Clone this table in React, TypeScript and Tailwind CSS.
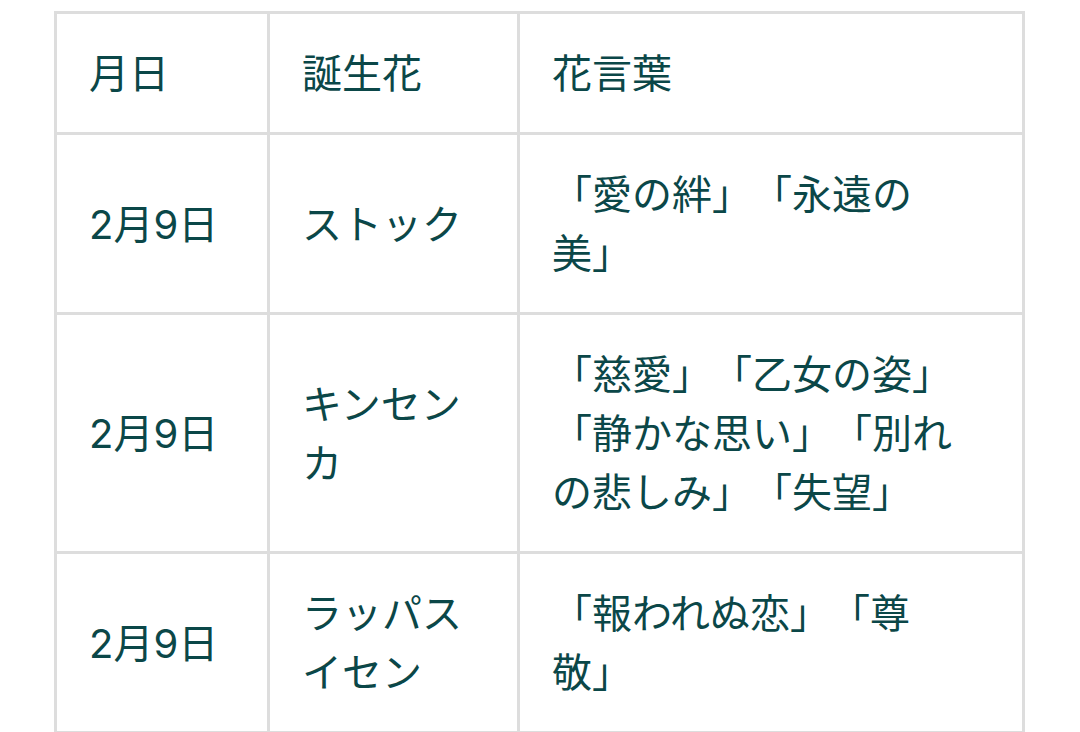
import React from "react";

const rows = [
  { date: "2月9日", flower: "ストック", words: "「愛の絆」「永遠の美」" },
  { date: "2月9日", flower: "キンセンカ", words: "「慈愛」「乙女の姿」「静かな思い」「別れの悲しみ」「失望」" },
  { date: "2月9日", flower: "ラッパスイセン", words: "「報われぬ恋」「尊敬」" },
];

const cell =
  "border-r-[3px] border-b-[3px] border-[#dddddd] pl-[32px] pt-[30px] pb-[29px] text-[40px] leading-[59px] [text-spacing-trim:space-all]";

export default function App() {
  return (
    <div
      className="w-[1080px] h-[732px] overflow-hidden bg-white pt-[11px] pl-[54px] text-[#0b4748]"
      style={{ fontFamily: '"Inter", "Noto Sans CJK JP", sans-serif' }}
    >
      <div className="grid grid-cols-[213px_250px_505px] w-[971px] border-l-[3px] border-t-[3px] border-[#dddddd]">
        <div className={`${cell} pr-[32px]`}>月日</div>
        <div className={`${cell} pr-[32px]`}>誕生花</div>
        <div className={`${cell} pr-[56px]`}>花言葉</div>
        {rows.map((r, i) => (
          <React.Fragment key={i}>
            <div className={`${cell} pr-[32px] flex items-center`}>{r.date}</div>
            <div className={`${cell} pr-[32px] flex items-center`}>
              <span>{r.flower}</span>
            </div>
            <div className={`${cell} pr-[56px] flex items-center`}>
              <span>{r.words}</span>
            </div>
          </React.Fragment>
        ))}
      </div>
    </div>
  );
}
